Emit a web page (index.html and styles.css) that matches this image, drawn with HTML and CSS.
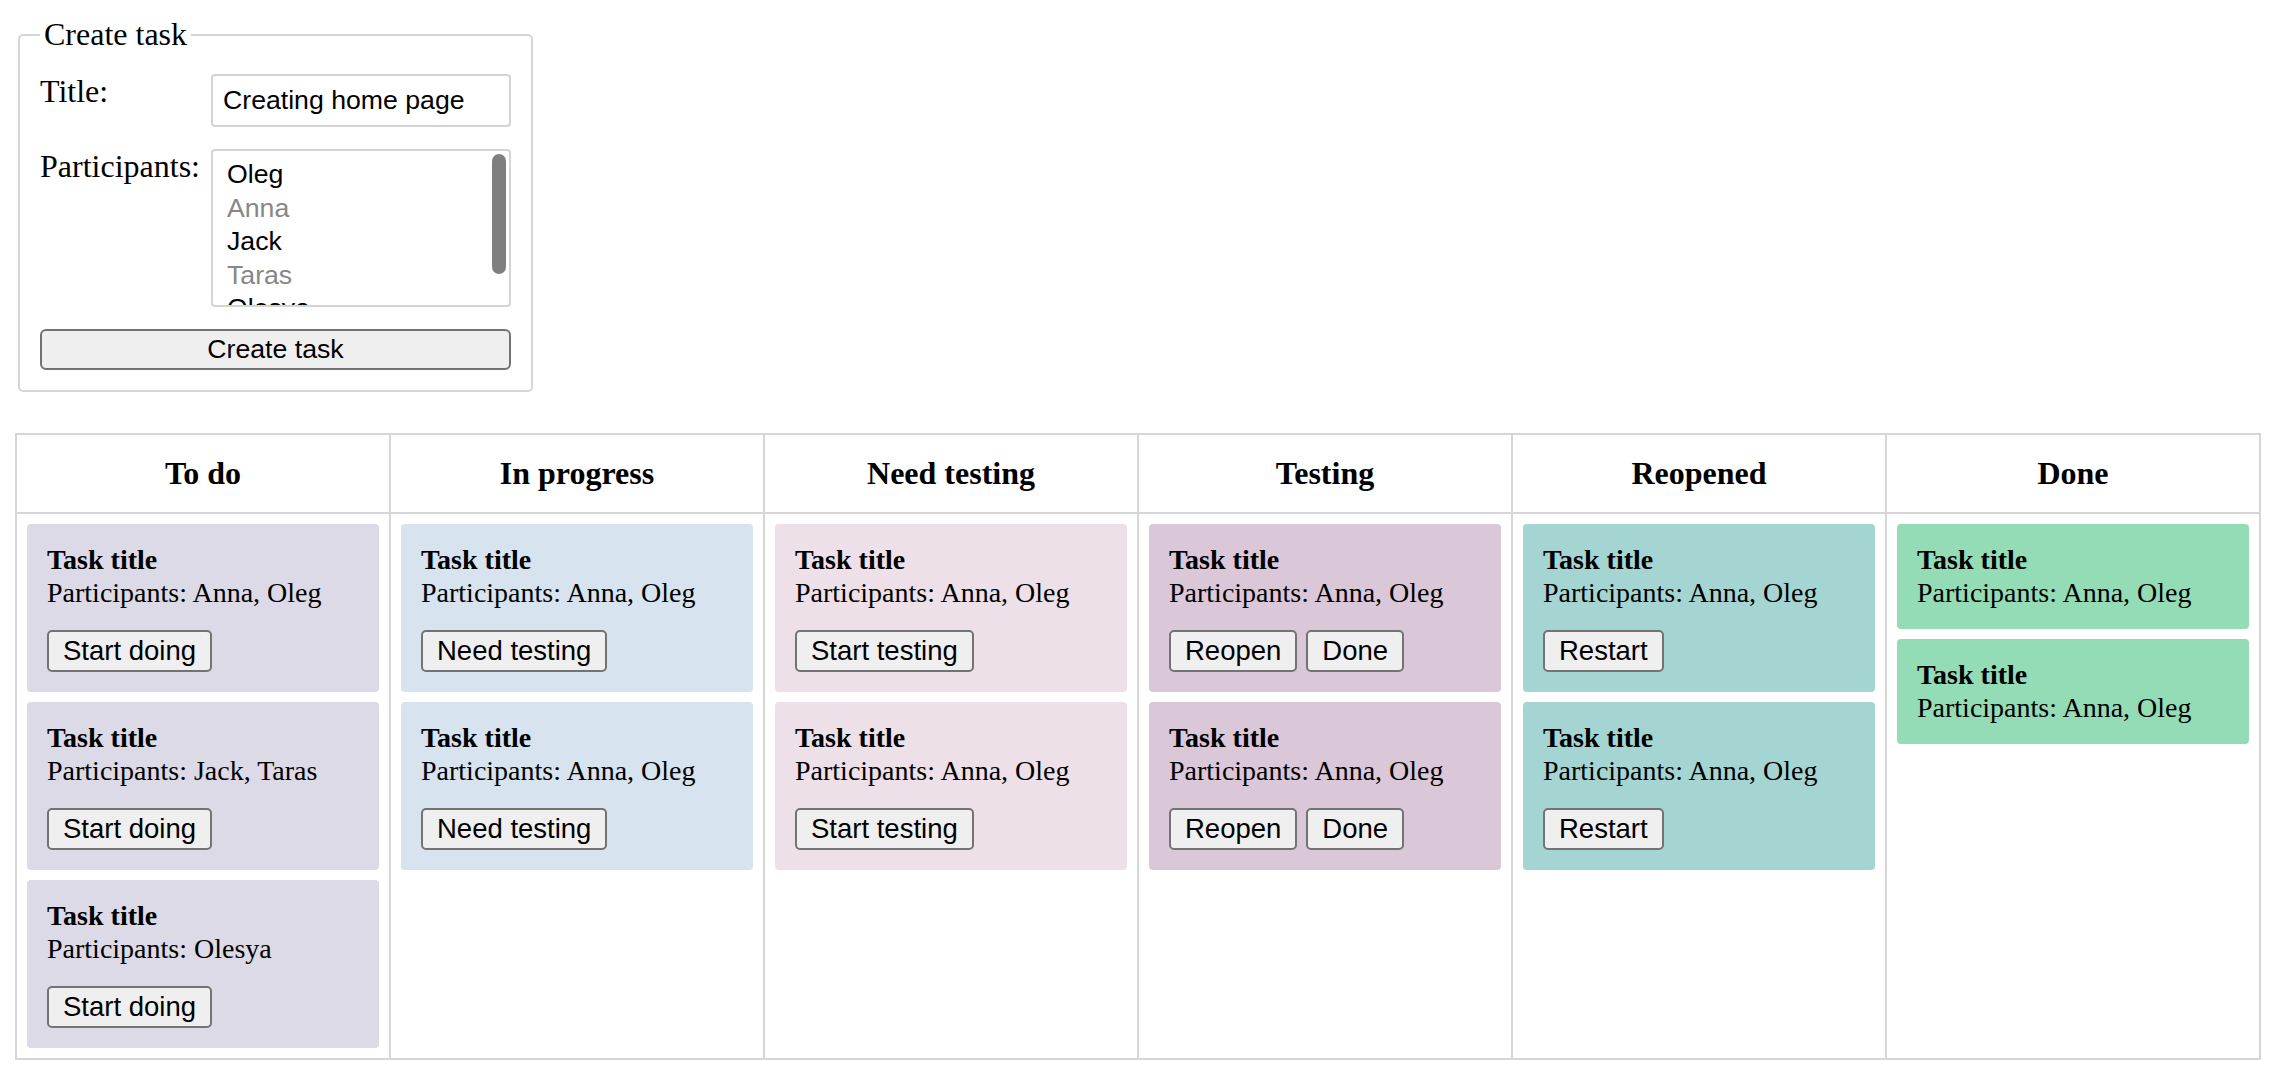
FILE: index.html
```html
<!DOCTYPE html>
<html lang="en">
<head>
<meta charset="utf-8">
<title>Task board</title>
<link rel="stylesheet" href="styles.css">
</head>
<body>
<main class="page">
  <fieldset class="create">
    <legend class="create-legend">Create task</legend>
    <div class="form">
      <label class="lbl" for="title">Title:</label>
      <input id="title" class="field" type="text" value="Creating home page">
      <label class="lbl">Participants:</label>
      <div class="listbox" role="listbox">
        <div class="opt">Oleg</div>
        <div class="opt off">Anna</div>
        <div class="opt">Jack</div>
        <div class="opt off">Taras</div>
        <div class="opt">Olesya</div>
        <span class="thumb"></span>
      </div>
      <button class="create-btn" type="button">Create task</button>
    </div>
  </fieldset>

  <section class="board">
    <div class="head">To do</div>
    <div class="head">In progress</div>
    <div class="head">Need testing</div>
    <div class="head">Testing</div>
    <div class="head">Reopened</div>
    <div class="head">Done</div>

    <div class="col">
      <div class="card todo">
        <div class="card-title">Task title</div>
        <div class="card-people">Participants: Anna, Oleg</div>
        <div class="actions"><button class="btn" type="button">Start doing</button></div>
      </div>
      <div class="card todo">
        <div class="card-title">Task title</div>
        <div class="card-people">Participants: Jack, Taras</div>
        <div class="actions"><button class="btn" type="button">Start doing</button></div>
      </div>
      <div class="card todo">
        <div class="card-title">Task title</div>
        <div class="card-people">Participants: Olesya</div>
        <div class="actions"><button class="btn" type="button">Start doing</button></div>
      </div>
    </div>

    <div class="col">
      <div class="card progress">
        <div class="card-title">Task title</div>
        <div class="card-people">Participants: Anna, Oleg</div>
        <div class="actions"><button class="btn" type="button">Need testing</button></div>
      </div>
      <div class="card progress">
        <div class="card-title">Task title</div>
        <div class="card-people">Participants: Anna, Oleg</div>
        <div class="actions"><button class="btn" type="button">Need testing</button></div>
      </div>
    </div>

    <div class="col">
      <div class="card need">
        <div class="card-title">Task title</div>
        <div class="card-people">Participants: Anna, Oleg</div>
        <div class="actions"><button class="btn" type="button">Start testing</button></div>
      </div>
      <div class="card need">
        <div class="card-title">Task title</div>
        <div class="card-people">Participants: Anna, Oleg</div>
        <div class="actions"><button class="btn" type="button">Start testing</button></div>
      </div>
    </div>

    <div class="col">
      <div class="card testing">
        <div class="card-title">Task title</div>
        <div class="card-people">Participants: Anna, Oleg</div>
        <div class="actions"><button class="btn" type="button">Reopen</button><button class="btn" type="button">Done</button></div>
      </div>
      <div class="card testing">
        <div class="card-title">Task title</div>
        <div class="card-people">Participants: Anna, Oleg</div>
        <div class="actions"><button class="btn" type="button">Reopen</button><button class="btn" type="button">Done</button></div>
      </div>
    </div>

    <div class="col">
      <div class="card reopened">
        <div class="card-title">Task title</div>
        <div class="card-people">Participants: Anna, Oleg</div>
        <div class="actions"><button class="btn" type="button">Restart</button></div>
      </div>
      <div class="card reopened">
        <div class="card-title">Task title</div>
        <div class="card-people">Participants: Anna, Oleg</div>
        <div class="actions"><button class="btn" type="button">Restart</button></div>
      </div>
    </div>

    <div class="col">
      <div class="card done">
        <div class="card-title">Task title</div>
        <div class="card-people">Participants: Anna, Oleg</div>
      </div>
      <div class="card done">
        <div class="card-title">Task title</div>
        <div class="card-people">Participants: Anna, Oleg</div>
      </div>
    </div>
  </section>
</main>
</body>
</html>
```

FILE: styles.css
```css
html, body {
  margin: 0;
  background: #ffffff;
  color: #000000;
  font-family: "Liberation Serif", "Times New Roman", serif;
}

.page {
  padding: 16px;
}

/* ---------- Create task form ---------- */
.create {
  margin: 0 0 0 2px;
  width: fit-content;
  border: 2px solid #d6d6d6;
  border-radius: 5px;
  padding: 21px 20px 20px 20px;
  font-size: 32px;
}

.create-legend {
  padding: 0 4px;
  font-size: 32px;
}

.form {
  display: grid;
  grid-template-columns: 171px 300px;
  row-gap: 22px;
  align-items: start;
}

.lbl {
  font-size: 32px;
  line-height: 34px;
}

.field {
  box-sizing: border-box;
  width: 300px;
  height: 53px;
  margin: 0;
  border: 2px solid #d4d4d4;
  border-radius: 4px;
  padding: 0 10px;
  font-family: "Liberation Sans", Arial, sans-serif;
  font-size: 26.67px;
  color: #000000;
  background: #ffffff;
  outline: none;
}

.listbox {
  position: relative;
  box-sizing: border-box;
  width: 300px;
  height: 158px;
  border: 2px solid #d4d4d4;
  border-radius: 4px;
  padding: 7px 0 0 14px;
  overflow: hidden;
  font-family: "Liberation Sans", Arial, sans-serif;
  font-size: 26.67px;
  line-height: 33.5px;
  background: #ffffff;
}

.opt {
  color: #000000;
}

.opt.off {
  color: #878787;
}

.thumb {
  position: absolute;
  top: 3px;
  right: 3px;
  width: 14px;
  height: 120px;
  border-radius: 7px;
  background: #7f7f7f;
}

.create-btn {
  grid-column: 1 / -1;
  box-sizing: border-box;
  height: 41px;
  margin: 0;
  border: 2px solid #727272;
  border-radius: 6px;
  background: #efefef;
  padding: 0;
  font-family: "Liberation Sans", Arial, sans-serif;
  font-size: 26.67px;
  color: #000000;
}

/* ---------- Board ---------- */
.board {
  display: grid;
  grid-template-columns: repeat(6, 374px);
  width: max-content;
  margin: 41px 0 0 -1px;
  border-top: 2px solid #d6d6d6;
  border-left: 2px solid #d6d6d6;
}

.head {
  box-sizing: border-box;
  border-right: 2px solid #d6d6d6;
  border-bottom: 2px solid #d6d6d6;
  padding: 20px;
  text-align: center;
  font-weight: bold;
  font-size: 32px;
  line-height: 37px;
}

.col {
  box-sizing: border-box;
  border-right: 2px solid #d6d6d6;
  border-bottom: 2px solid #d6d6d6;
  padding: 10px;
  display: flex;
  flex-direction: column;
  gap: 10px;
}

.card {
  border-radius: 4px;
  padding: 20px;
  font-size: 28px;
  line-height: 32.5px;
}

.card-title {
  font-weight: bold;
}

.actions {
  display: flex;
  gap: 9px;
  margin-top: 21px;
}

.btn {
  box-sizing: border-box;
  height: 42px;
  margin: 0;
  border: 2px solid #737373;
  border-radius: 5px;
  background: #efefef;
  padding: 0 14px;
  font-family: "Liberation Sans", Arial, sans-serif;
  font-size: 27.5px;
  color: #000000;
}

.todo { background: #dcdae6; }
.progress { background: #d7e3ef; }
.need { background: #ede0e8; }
.testing { background: #dac7d8; }
.reopened { background: #a5d5d2; }
.done { background: #94dcb5; }
```
